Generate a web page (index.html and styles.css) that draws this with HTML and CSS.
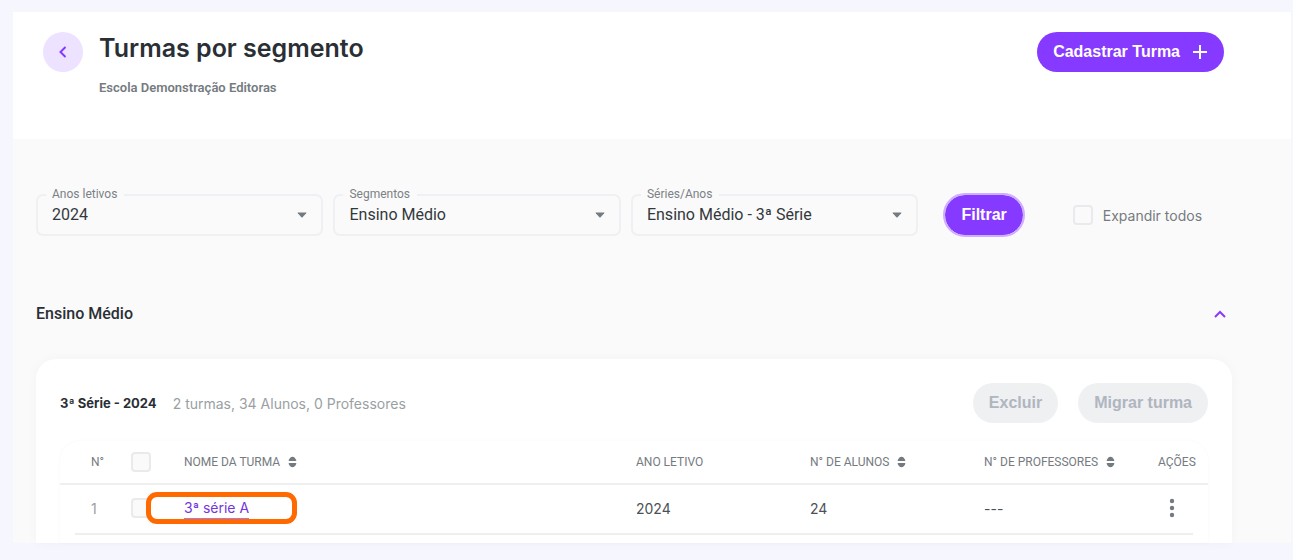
FILE: index.html
```html
<!DOCTYPE html>
<html lang="pt-BR">
<head>
<meta charset="utf-8">
<title>Turmas por segmento</title>
<link rel="stylesheet" href="styles.css">
</head>
<body>
<svg class="defs" aria-hidden="true">
  <symbol id="sort" viewBox="0 0 10 12"><path d="M1.500 5Q.3 5 .8 3.900C1.600 2.200 3 .2 5 .2S8.400 2.200 9.200 3.900Q9.700 5 8.500 5ZM1.500 7Q.3 7 .8 8.100C1.600 9.800 3 11.800 5 11.800S8.400 9.800 9.200 8.100Q9.700 7 8.500 7Z"/></symbol>
</svg>
<div class="shell">
  <header class="top">
    <button class="back" type="button" aria-label="Voltar">
      <svg width="8" height="12" viewBox="0 0 8 12"><path d="M6.500 1 1.500 6l5 5"/></svg>
    </button>
    <div class="heading">
      <h1>Turmas por segmento</h1>
      <p>Escola Demonstração Editoras</p>
    </div>
    <button class="btn primary" type="button">Cadastrar Turma
      <svg width="16" height="16" viewBox="0 0 16 16"><path d="M8 1v14M1 8h14"/></svg>
    </button>
  </header>

  <main>
    <form class="filters">
      <fieldset class="field">
        <legend><label for="ano">Anos letivos</label></legend>
        <select id="ano"><option>2024</option></select>
      </fieldset>
      <fieldset class="field">
        <legend><label for="seg">Segmentos</label></legend>
        <select id="seg"><option>Ensino Médio</option></select>
      </fieldset>
      <fieldset class="field">
        <legend><label for="serie">Séries/Anos</label></legend>
        <select id="serie"><option>Ensino Médio - 3ª Série</option></select>
      </fieldset>
      <button class="btn filter" type="button">Filtrar</button>
      <label class="expand"><input class="check" type="checkbox">Expandir todos</label>
    </form>

    <div class="section">
      <h2>Ensino Médio</h2>
      <button class="toggle" type="button" aria-label="Recolher">
        <svg width="14" height="9" viewBox="0 0 14 9"><path d="m2 7 5-5 5 5"/></svg>
      </button>
    </div>

    <section class="card">
      <div class="card-head">
        <h3>3ª Série - 2024</h3>
        <p>2 turmas, 34 Alunos, 0 Professores</p>
        <button class="btn muted" type="button" disabled>Excluir</button>
        <button class="btn muted" type="button" disabled>Migrar turma</button>
      </div>
      <div class="table-box">
        <table>
          <colgroup><col class="c-num"><col class="c-check"><col><col class="c-data"><col class="c-data"><col class="c-data"><col class="c-act"></colgroup>
          <thead>
            <tr>
              <th class="num">N°</th>
              <th><input class="check" type="checkbox" aria-label="Selecionar todas"></th>
              <th>NOME DA TURMA <svg class="sort"><use href="#sort"/></svg></th>
              <th>ANO LETIVO</th>
              <th>N° DE ALUNOS <svg class="sort"><use href="#sort"/></svg></th>
              <th>N° DE PROFESSORES <svg class="sort"><use href="#sort"/></svg></th>
              <th>AÇÕES</th>
            </tr>
          </thead>
          <tbody>
            <tr>
              <td class="num">1</td>
              <td><input class="check" type="checkbox" aria-label="Selecionar 3ª série A"></td>
              <td><span class="marked"><a href="#">3ª série A</a></span></td>
              <td>2024</td>
              <td>24</td>
              <td>---</td>
              <td><button class="more" type="button" aria-label="Mais ações"><svg width="6" height="20" viewBox="0 0 6 20"><circle cx="3" cy="3" r="2.200"/><circle cx="3" cy="10" r="2.200"/><circle cx="3" cy="17" r="2.200"/></svg></button></td>
            </tr>
          </tbody>
        </table>
      </div>
    </section>
  </main>
</div>
</body>
</html>
```
FILE: styles.css
```css
*, *::after { box-sizing: border-box; }
body {
  margin: 0;
  padding: 12px 2px 16px 13px;
  background: #f6f6ff;
  color: #2a2f35;
  font-family: Inter, "Liberation Sans", sans-serif;
  font-size: 14px;
}
h1, h2, h3, p { margin: 0; }
button { padding: 0; border: 0; background: none; }
svg { fill: none; }
.defs { position: absolute; width: 0; height: 0; }
.shell { background: #fafafa; }

.top {
  display: flex;
  align-items: flex-start;
  gap: 16px;
  min-height: 127px;
  padding: 20px 67px 20px 30px;
  background: #fff;
}
.back {
  display: grid;
  place-items: center;
  width: 40px;
  height: 40px;
  border-radius: 50%;
  background: #ede2ff;
}
.back svg, .toggle svg { stroke: #873aff; stroke-width: 2; }
.heading { flex: 1; }
h1 { font-size: 25px; font-weight: 600; line-height: 32px; }
.heading p {
  margin-top: 16px;
  color: #757b80;
  font: 600 13px/16px Roboto, sans-serif;
}
.btn {
  height: 40px;
  border-radius: 22px;
  font: 700 16px/20px "Liberation Sans", Arial, sans-serif;
}
.primary {
  display: flex;
  align-items: center;
  gap: 12px;
  padding: 0 16px;
  background: #873aff;
  color: #fff;
}
.primary svg { stroke: #fff; stroke-width: 2; }

main { padding: 48px 59px 0 23px; }
.filters { display: flex; align-items: flex-end; gap: 10px; }
.field {
  flex: 1 1 0;
  min-width: 0;
  height: 49px;
  margin: 0;
  padding: 0 12px 0 8px;
  border: 2px solid #f0f0f4;
  border-radius: 7px;
}
.field legend {
  padding: 0 7px 2px 6px;
  color: #7b8186;
  font: 12px/14px Roboto, sans-serif;
}
.field select {
  display: block;
  width: 100%;
  height: 24px;
  padding: 0 6px;
  border: 0;
  appearance: none;
  background: url("data:image/svg+xml,%3Csvg xmlns='http://www.w3.org/2000/svg' width='10' height='6'%3E%3Cpath d='M1 .5h8q.8 0 .2.7L5.600 5.200q-.6.6-1.200 0L.8 1.200Q.2.5 1 .5' fill='%23747b80'/%3E%3C/svg%3E") right 2px center no-repeat;
  color: #33383d;
  font: 16px/24px Roboto, sans-serif;
}
.filter {
  height: 44px;
  margin: 0 38px -1px 15px;
  padding: 0 16px;
  border: 2px solid #cdaeff;
  background: #873aff;
  background-clip: padding-box;
  color: #fff;
}
.expand {
  display: flex;
  align-items: center;
  align-self: flex-end;
  gap: 10px;
  height: 42px;
  margin-right: 30px;
  color: #757b80;
}
.check {
  display: block;
  appearance: none;
  width: 20px;
  height: 20px;
  margin: 0;
  border: 2px solid #e9eaee;
  border-radius: 4px;
  background: #fafafa;
}

.section {
  display: flex;
  align-items: center;
  justify-content: space-between;
  margin: 66px 5px 33px 0;
}
h2 { font: 500 16px/24px Roboto, sans-serif; }
.toggle { display: flex; }

.card {
  padding: 24px 24px 0;
  border-radius: 20px 20px 0 0;
  background: #fff;
  box-shadow: 0 0 12px #00000008;
}
.card-head { display: flex; align-items: center; }
h3 { font-size: 13px; font-weight: 700; line-height: 20px; }
.card-head p { flex: 1; margin-left: 16px; color: #9a9fa3; }
.muted {
  margin-left: 20px;
  padding: 0 16px;
  background: #eef0f2;
  color: #b0b5bf;
}
.table-box {
  margin-top: 18px;
  padding-bottom: 8px;
  border-radius: 20px 20px 0 0;
  box-shadow: 0 0 3px #0000000a;
}
table { width: 100%; border-collapse: collapse; table-layout: fixed; }
.c-num { width: 71px; }
.c-check { width: 53px; }
.c-data { width: 174px; }
.c-act { width: 50px; }
th, td { padding: 0; text-align: left; white-space: nowrap; }
th {
  height: 43px;
  border-bottom: 2px solid #efeff0;
  color: #757b80;
  font: 12px/16px Roboto, sans-serif;
}
td { height: 51px; padding-bottom: 4px; color: #4b5157; }
tbody tr { background: linear-gradient(#efeff0, #efeff0) center bottom / calc(100% - 30px) 2px no-repeat; }
.num { padding-left: 31px; }
td.num { color: #9a9fa3; }
.sort { width: 9px; height: 12px; margin-left: 5px; vertical-align: -2px; fill: #747b80; }
.marked { position: relative; display: inline-block; }
.marked::after {
  content: "";
  position: absolute;
  left: -38px;
  top: -6px;
  width: 151px;
  height: 32px;
  border: 5px solid #ff6900;
  border-radius: 11px;
  pointer-events: none;
}
.marked a {
  display: block;
  border-bottom: 1px solid #a878f0;
  color: #7436dc;
  line-height: 20px;
  text-decoration: none;
}
.more { display: block; margin-left: 11px; }
.more svg { display: block; fill: #747b80; }
```
